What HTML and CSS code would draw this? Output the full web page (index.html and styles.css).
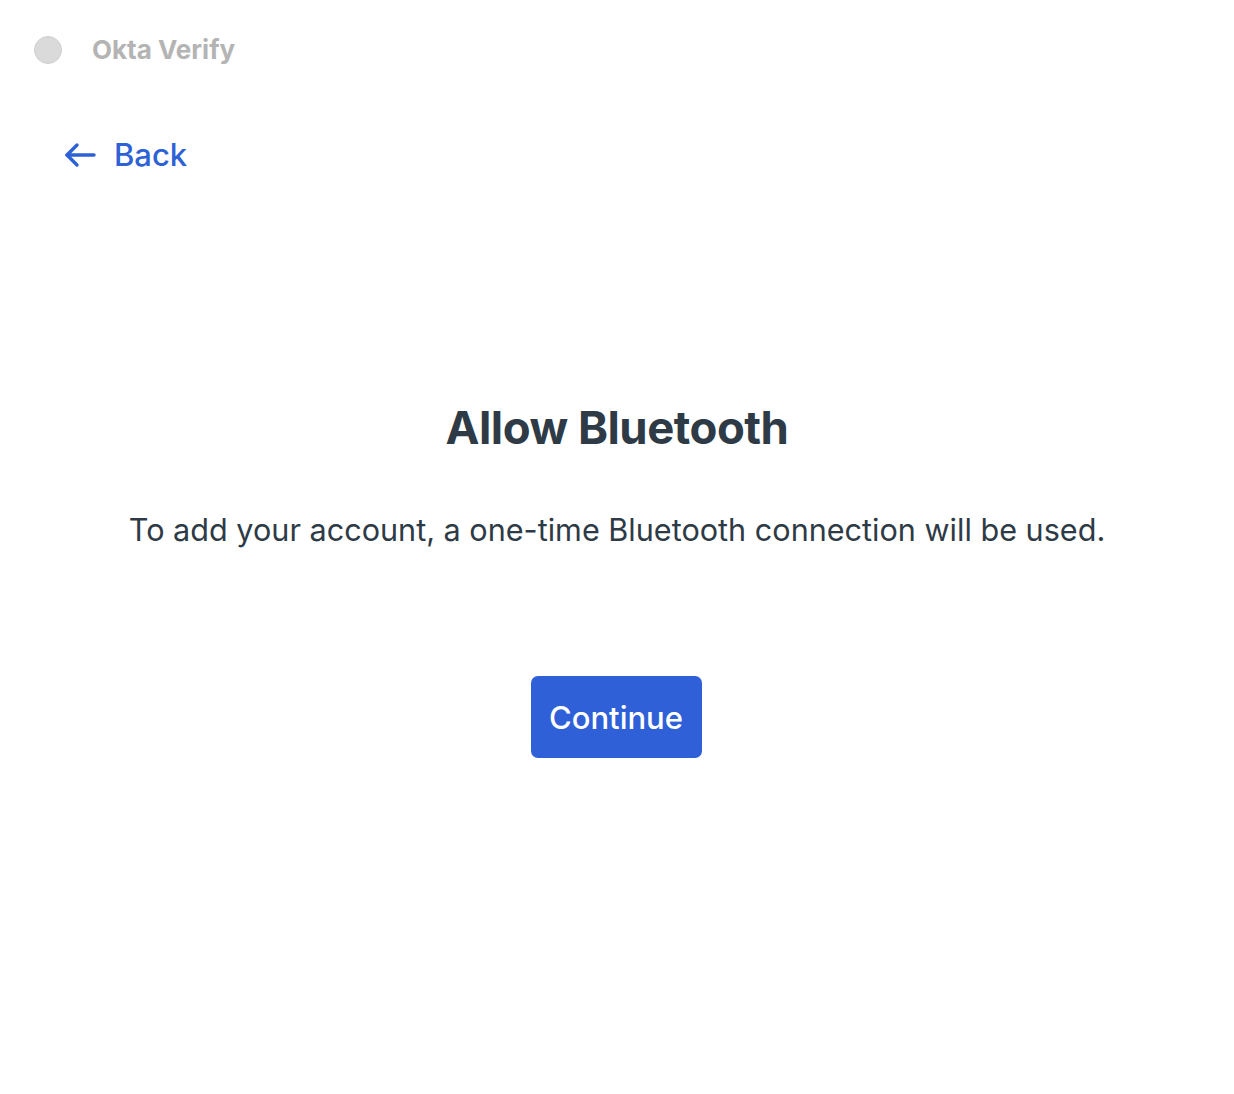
FILE: index.html
```html
<!DOCTYPE html>
<html>
<head>
<meta charset="utf-8">
<link rel="stylesheet" href="styles.css">
</head>
<body>
<div class="window">
  <header class="titlebar">
    <span class="dot"></span>
    <span class="app-name">Okta Verify</span>
  </header>
  <nav class="nav">
    <a class="back" href="#">
      <svg class="back-icon" width="32" height="26" viewBox="0 0 32 26" fill="none" stroke="#2d61d6" stroke-width="3.4" stroke-linecap="round" stroke-linejoin="round">
        <path d="M30 13H3"/>
        <path d="M13 3L3 13l10 10"/>
      </svg>
      <span>Back</span>
    </a>
  </nav>
  <main class="content">
    <h1 class="title">Allow Bluetooth</h1>
    <p class="desc">To add your account, a one-time Bluetooth connection will be used.</p>
    <button class="btn">Continue</button>
  </main>
</div>
</body>
</html>
```
FILE: styles.css
```css
html, body {
  margin: 0;
  padding: 0;
  background: #ffffff;
}
body {
  font-family: Inter, "Noto Sans", sans-serif;
  width: 1234px;
  height: 1094px;
  overflow: hidden;
}
.window {
  display: flex;
  flex-direction: column;
}
.titlebar {
  display: flex;
  align-items: center;
  box-sizing: border-box;
  height: 76px;
  padding: 23px 0 0 34px;
  gap: 30px;
}
.dot {
  width: 26px;
  height: 26px;
  border-radius: 50%;
  background: #dadada;
  border: 1px solid #cfcfcf;
}
.app-name {
  font-size: 26px;
  font-weight: 700;
  color: #b4b4b4;
}
.nav {
  padding: 60px 0 0 64px;
}
.back {
  display: inline-flex;
  align-items: center;
  gap: 18px;
  color: #2d61d6;
  text-decoration: none;
  font-size: 31px;
  font-weight: 500;
}
.content {
  display: flex;
  flex-direction: column;
  align-items: center;
  padding-top: 227px;
}
.title {
  margin: 0;
  font-size: 45.5px;
  font-weight: 700;
  color: #2e3b46;
  letter-spacing: -0.5px;
}
.desc {
  margin: 56px 0 0;
  font-size: 30.6px;
  color: #2e3b46;
}
.btn {
  margin-top: 128px;
  margin-right: 2px;
  width: 171px;
  height: 82px;
  border: none;
  border-radius: 7px;
  background: #2f60d8;
  color: #ffffff;
  font-family: Inter, "Noto Sans", sans-serif;
  font-size: 31px;
  font-weight: 500;
}
```
